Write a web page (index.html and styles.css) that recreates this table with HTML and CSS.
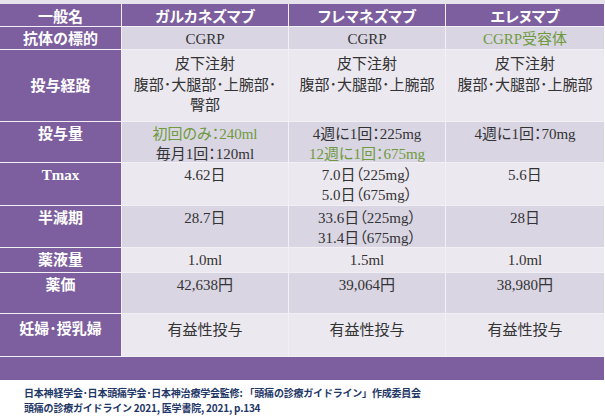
FILE: index.html
```html
<!DOCTYPE html>
<html lang="ja">
<head>
<meta charset="utf-8">
<link rel="stylesheet" href="styles.css">
</head>
<body>
<div class="topstrip"></div>
<div class="table">
  <div class="hd">一般名</div>
  <div class="hd">ガルカネズマブ</div>
  <div class="hd">フレマネズマブ</div>
  <div class="hd">エレヌマブ</div>

  <div class="lab">抗体の標的</div>
  <div class="c dk">CGRP</div>
  <div class="c dk">CGRP</div>
  <div class="c dk green">CGRP受容体</div>

  <div class="lab mid">投与経路</div>
  <div class="c lt route">皮下注射<br>腹部･大腿部･上腕部･<br>臀部</div>
  <div class="c lt route">皮下注射<br>腹部･大腿部･上腕部</div>
  <div class="c lt route">皮下注射<br>腹部･大腿部･上腕部</div>

  <div class="lab">投与量</div>
  <div class="c dk"><span class="green">初回のみ：240ml</span><br>毎月1回：120ml</div>
  <div class="c dk">4週に1回：225mg<br><span class="green">12週に1回：675mg</span></div>
  <div class="c dk">4週に1回：70mg</div>

  <div class="lab">Tmax</div>
  <div class="c lt">4.62日</div>
  <div class="c lt">7.0日（225mg）<br>5.0日（675mg）</div>
  <div class="c lt">5.6日</div>

  <div class="lab">半減期</div>
  <div class="c dk">28.7日</div>
  <div class="c dk">33.6日（225mg）<br>31.4日（675mg）</div>
  <div class="c dk">28日</div>

  <div class="lab">薬液量</div>
  <div class="c lt">1.0ml</div>
  <div class="c lt">1.5ml</div>
  <div class="c lt">1.0ml</div>

  <div class="lab">薬価</div>
  <div class="c dk">42,638円</div>
  <div class="c dk">39,064円</div>
  <div class="c dk">38,980円</div>

  <div class="lab preg">妊婦･授乳婦</div>
  <div class="c lt preg gothic">有益性投与</div>
  <div class="c lt preg gothic">有益性投与</div>
  <div class="c lt preg gothic">有益性投与</div>

  <div class="bar"></div>
</div>
<div class="foot">
  <div>日本神経学会･日本頭痛学会･日本神治療学会監修: 「頭痛の診療ガイドライン」作成委員会</div>
  <div>頭痛の診療ガイドライン 2021, 医学書院, 2021, p.134</div>
</div>
</body>
</html>
```

FILE: styles.css
```css
html, body {
  margin: 0;
  padding: 0;
  background: #ffffff;
  width: 605px;
  height: 419px;
  overflow: hidden;
}

.topstrip {
  height: 4px;
  background: #e6e3ec;
}

.table {
  display: grid;
  grid-template-columns: 121px 166px 156px 158px;
  grid-template-rows: 22px 22px 71px 40px 42px 41px 24px 40px 42px 23px;
  gap: 1px;
  background: #f2f0f5;
  width: 604px;
  font-family: "Liberation Serif", "Noto Sans CJK JP", serif;
  font-feature-settings: "palt";
}

.hd {
  background: #7d5e9e;
  color: #ffffff;
  font-family: "Noto Sans CJK JP", sans-serif;
  font-weight: 700;
  font-size: 15px;
  line-height: 20px;
  padding-top: 2px;
  text-align: center;
}

.lab {
  background: #7d5e9e;
  color: #ffffff;
  font-weight: 700;
  font-size: 15px;
  line-height: 20px;
  padding-top: 2px;
  text-align: center;
}

.lab.mid {
  display: flex;
  align-items: center;
  justify-content: center;
  padding-top: 0;
}

.c {
  color: #333333;
  font-size: 15px;
  line-height: 20px;
  padding-top: 2px;
  text-align: center;
}

.c.route {
  padding-top: 3px;
  line-height: 20.5px;
  font-family: "Noto Sans CJK JP", sans-serif;
}

.preg {
  padding-top: 5px;
}

.gothic {
  font-family: "Noto Sans CJK JP", sans-serif;
}

.dk {
  background: #d9d5e3;
}

.lt {
  background: #ebe8f0;
}

.green {
  color: #6f9a3e;
}

.bar {
  grid-column: 1 / 5;
  background: #7d5e9e;
}

.foot {
  margin: 5px 0 0 24px;
  font-family: "Noto Sans CJK JP", sans-serif;
  font-size: 10px;
  line-height: 15px;
  color: #1f3767;
  font-weight: 700;
  letter-spacing: -0.2px;
}
```
